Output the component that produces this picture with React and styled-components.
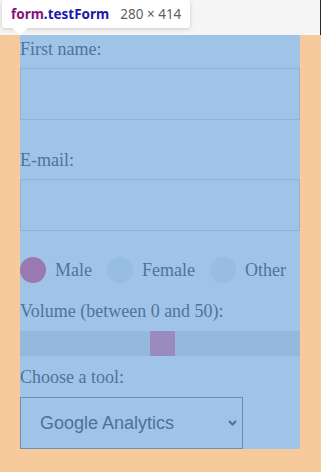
import React from "react";
import styled, { createGlobalStyle } from "styled-components";

const GlobalStyle = createGlobalStyle`
  html, body {
    margin: 0;
    padding: 0;
    background: #f9cc9d;
  }
  body {
    width: 321px;
    height: 472px;
    overflow: hidden;
  }
`;

const Page = styled.div`
  position: relative;
  display: flex;
  flex-direction: column;
  width: 321px;
  height: 472px;
`;

const TopStrip = styled.div`
  height: 35px;
  background: #f5f5f5;
  border-right: 1px solid #2a2a2a;
  box-sizing: border-box;
`;

const MarginBox = styled.div`
  flex: 1;
  background: #f7ca9b;
  padding: 0 21px 0 20px;
`;

const Form = styled.form`
  display: flex;
  flex-direction: column;
  width: 280px;
  height: 414px;
  box-sizing: border-box;
  padding-top: 4px;
  background: #a0c4e8;
  font-family: "Liberation Serif", "Times New Roman", serif;
  font-size: 18px;
  line-height: 20px;
  color: #50739a;
`;

const Label = styled.label`
  display: block;
  margin-top: ${(p) => p.$top || 0}px;
`;

const TextInput = styled.input`
  display: block;
  box-sizing: border-box;
  width: 280px;
  height: 52px;
  margin: 9px 0 0;
  border: 1px solid #8fb3d7;
  background: transparent;
  outline: none;
`;

const RadioRow = styled.div`
  display: flex;
  align-items: center;
  height: 26px;
  margin-top: 26px;
`;

const RadioOption = styled.label`
  display: flex;
  align-items: center;
  margin-right: 15px;
`;

const Radio = styled.input`
  appearance: none;
  width: 26px;
  height: 26px;
  margin: 0 9px 0 0;
  border-radius: 50%;
  background: ${(p) => (p.checked ? "#9a78b0" : "#98bde2")};
`;

const Range = styled.input`
  appearance: none;
  display: block;
  width: 280px;
  height: 25px;
  margin: 10px 0 0;
  background: #94b9dc;

  &::-webkit-slider-runnable-track {
    height: 25px;
    background: transparent;
  }
  &::-webkit-slider-thumb {
    appearance: none;
    width: 25px;
    height: 25px;
    background: #9a8bbf;
    border: none;
    border-radius: 0;
  }
`;

const SelectWrap = styled.div`
  position: relative;
  width: 223px;
  height: 52px;
  margin-top: 10px;
`;

const Select = styled.select`
  appearance: none;
  box-sizing: border-box;
  width: 100%;
  height: 100%;
  padding: 0 0 0 19px;
  border: 1px solid #6b8fb6;
  border-radius: 0;
  background: transparent;
  font-family: "Liberation Sans", Arial, sans-serif;
  font-size: 18px;
  color: #4d7196;
  outline: none;
`;

const Chevron = styled.svg`
  position: absolute;
  right: 6px;
  top: 23px;
  pointer-events: none;
`;

const Tooltip = styled.div`
  position: absolute;
  left: 2px;
  top: 0;
  display: flex;
  align-items: center;
  gap: 11px;
  height: 28px;
  padding: 0 9px;
  background: #fff;
  border-radius: 3px;
  box-shadow: 0 1px 4px rgba(0, 0, 0, 0.18);
  font-family: "Noto Sans", "Open Sans", sans-serif;
  font-size: 13.5px;
  white-space: nowrap;

  &::after {
    content: "";
    position: absolute;
    left: 10px;
    bottom: -7px;
    border-left: 8px solid transparent;
    border-right: 8px solid transparent;
    border-top: 7px solid #fff;
  }
`;

const TagName = styled.span`
  font-weight: 700;
  color: #881280;
`;

const ClassName = styled.span`
  font-weight: 700;
  color: #1a1aa6;
`;

const Size = styled.span`
  color: #5f5f5f;
`;

export default function App() {
  return (
    <>
      <GlobalStyle />
      <Page>
        <TopStrip />
        <MarginBox>
          <Form className="testForm" onSubmit={(e) => e.preventDefault()}>
            <Label htmlFor="fname">First name:</Label>
            <TextInput id="fname" type="text" />
            <Label htmlFor="email" $top={30}>E-mail:</Label>
            <TextInput id="email" type="email" />
            <RadioRow>
              <RadioOption>
                <Radio type="radio" name="gender" checked readOnly />
                Male
              </RadioOption>
              <RadioOption>
                <Radio type="radio" name="gender" checked={false} readOnly />
                Female
              </RadioOption>
              <RadioOption>
                <Radio type="radio" name="gender" checked={false} readOnly />
                Other
              </RadioOption>
            </RadioRow>
            <Label htmlFor="vol" $top={18}>Volume (between 0 and 50):</Label>
            <Range id="vol" type="range" min="0" max="50" step="0.5" defaultValue="25.5" />
            <Label htmlFor="tool" $top={11}>Choose a tool:</Label>
            <SelectWrap>
              <Select id="tool" defaultValue="ga">
                <option value="ga">Google Analytics</option>
                <option value="gtm">Google Tag Manager</option>
              </Select>
              <Chevron width="9" height="6" viewBox="0 0 9 6">
                <path d="M1 1 L4.5 4.5 L8 1" fill="none" stroke="#4d7196" strokeWidth="2" />
              </Chevron>
            </SelectWrap>
          </Form>
        </MarginBox>
        <Tooltip>
          <span>
            <TagName>form</TagName>
            <ClassName>.testForm</ClassName>
          </span>
          <Size>280 × 414</Size>
        </Tooltip>
      </Page>
    </>
  );
}
